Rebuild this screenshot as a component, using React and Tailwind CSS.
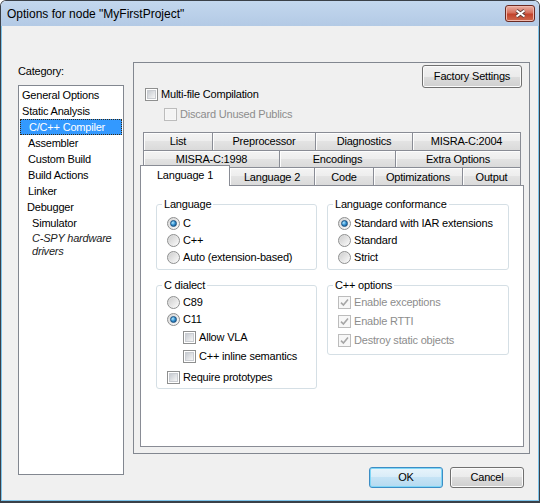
import clsx from 'clsx';

const categories = [
  { label: 'General Options', pad: 'pl-[2px]' },
  { label: 'Static Analysis', pad: 'pl-[2px]' },
  { label: 'C/C++ Compiler', pad: 'pl-[8px]', selected: true },
  { label: 'Assembler', pad: 'pl-[8px]' },
  { label: 'Custom Build', pad: 'pl-[8px]' },
  { label: 'Build Actions', pad: 'pl-[8px]' },
  { label: 'Linker', pad: 'pl-[8px]' },
  { label: 'Debugger', pad: 'pl-[7px]' },
];

const tabRows = [
  [
    { label: 'List', w: 'w-[70px]' },
    { label: 'Preprocessor', w: 'w-[104px]' },
    { label: 'Diagnostics', w: 'w-[98px]' },
    { label: 'MISRA-C:2004', w: 'w-[109px]' },
  ],
  [
    { label: 'MISRA-C:1998', w: 'w-[137px]' },
    { label: 'Encodings', w: 'w-[117px]' },
    { label: 'Extra Options', w: 'w-[126px]' },
  ],
];

const frontTabs = [
  { label: 'Language 1', w: 'w-[90px]', selected: true },
  { label: 'Language 2', w: 'w-[86px]' },
  { label: 'Code', w: 'w-[60px]' },
  { label: 'Optimizations', w: 'w-[90px]' },
  { label: 'Output', w: 'w-[59px]' },
];

const tabBg = 'bg-[linear-gradient(#f4f4f4,#ededed_50%,#e3e3e3_50%,#dadada)]';

function Checkbox({ checked, disabled }) {
  return (
    <span
      className={clsx(
        'flex h-[13px] w-[13px] shrink-0 items-center justify-center border p-px',
        disabled ? 'border-[#bcbcbc] bg-[#f7f7f7]' : 'border-[#8e8f8f] bg-white'
      )}
    >
      {checked ? (
        <svg width="9" height="9" viewBox="0 0 9 9">
          <path d="M1 4.6 L3.4 7 L8 1.4" fill="none" stroke="#a6a6a6" strokeWidth="1.6" />
        </svg>
      ) : (
        <span
          className={clsx(
            'h-full w-full',
            disabled ? 'bg-[#f4f4f4]' : 'border border-[#c9ccd1] bg-linear-to-br from-[#c7cbd1] to-[#f6f6f6]'
          )}
        />
      )}
    </span>
  );
}

function Radio({ checked }) {
  return (
    <span className="flex h-[13px] w-[13px] shrink-0 items-center justify-center rounded-full border border-[#8e8f8f] bg-linear-to-br from-[#d6d6d6] to-[#fbfbfb]">
      {checked ? (
        <span className="h-[7px] w-[7px] rounded-full border border-[#1c5180] bg-radial-[at_35%_35%] from-[#b4e8ff] via-[#2f8fd0] to-[#0f4174]" />
      ) : (
        <span className="h-[9px] w-[9px] rounded-full bg-linear-to-br from-[#cfcfcf] to-[#f8f8f8]" />
      )}
    </span>
  );
}

function RadioRow({ label, checked }) {
  return (
    <div className="flex h-[17px] items-center gap-[3px]">
      <Radio checked={checked} />
      <span>{label}</span>
    </div>
  );
}

function CheckRow({ label, checked, disabled, className }) {
  return (
    <div className={clsx('flex h-[19px] items-center gap-[3px]', className)}>
      <Checkbox checked={checked} disabled={disabled} />
      <span className={disabled ? 'text-[#8d8d8d]' : ''}>{label}</span>
    </div>
  );
}

function Group({ title, children, className }) {
  return (
    <fieldset className="rounded-[3px] border border-[#d5dfe5]">
      <legend className="ml-[5px] px-[2px] leading-[13px]">{title}</legend>
      <div className={clsx('pl-[10px]', className)}>{children}</div>
    </fieldset>
  );
}

function Button({ children, className, primary }) {
  return (
    <button
      className={clsx(
        'flex items-center justify-center rounded-[3px] border',
        primary
          ? 'border-[#3c8dc5] bg-[linear-gradient(#e8f4fb,#d8ecf8_50%,#c5e3f5_50%,#b5daf0)] shadow-[inset_0_0_0_1px_#7fd6f6]'
          : 'border-[#707070] bg-[linear-gradient(#f2f2f2,#ebebeb_50%,#dddddd_50%,#cfcfcf)] shadow-[inset_0_0_0_1px_#fbfbfb]',
        className
      )}
    >
      {children}
    </button>
  );
}

function Tab({ label, w, first }) {
  return (
    <div
      className={clsx(
        'flex h-full items-center justify-center border border-b-0 border-[#898c95] shadow-[inset_1px_1px_0_#fdfdfd]',
        tabBg,
        w,
        !first && '-ml-px'
      )}
    >
      {label}
    </div>
  );
}

export default function App() {
  return (
    <div className="flex h-[503px] w-[540px] flex-col overflow-hidden rounded-t-[6px] border border-b-2 border-[#3a4048] font-['Liberation_Sans',Arial,sans-serif] text-[11px] tracking-[-0.2px] text-black">
      {/* title bar */}
      <div className="flex h-[25px] shrink-0 items-center justify-between bg-linear-to-b from-[#c3d7ee] to-[#b3cae5] pl-[6px] pr-[4px]">
        <span className="text-[12px] tracking-normal">Options for node "MyFirstProject"</span>
        <div className="flex h-[17px] w-[30px] items-center justify-center rounded-[3px] border border-[#6b2a22] bg-[linear-gradient(#eab0a4,#d6705d_45%,#c2432c_55%,#cf6a4f)] shadow-[inset_0_0_0_1px_#f0b9ad]">
          <svg width="13" height="9" viewBox="0 0 13 9">
            <path d="M2.5 1.5 L10.5 7.5 M10.5 1.5 L2.5 7.5" stroke="#5b3a36" strokeWidth="3.6" />
            <path d="M2.5 1.5 L10.5 7.5 M10.5 1.5 L2.5 7.5" stroke="#ffffff" strokeWidth="2" />
          </svg>
        </div>
      </div>

      <div className="flex flex-1 border-x border-b border-[#7ec4ea] bg-[#f0f0f0] pl-[16px]">
        {/* category list */}
        <div className="flex flex-col pt-[39px]">
          <span className="leading-[13px]">Category:</span>
          <div className="mt-[7px] h-[390px] w-[106px] border border-[#828790] bg-white pt-px">
            {categories.map((c) => (
              <div
                key={c.label}
                className={clsx(
                  'mx-px flex h-[16px] items-center',
                  c.pad,
                  c.selected && 'border border-dotted border-[#3b2a10] bg-[#3399ff] text-white'
                )}
              >
                {c.label}
              </div>
            ))}
            <div className="mx-px flex h-[17px] items-center pl-[12px]">Simulator</div>
            <div className="mx-px pl-[12px] italic leading-[13px] text-[#222]">
              C-SPY hardware
              <br />
              drivers
            </div>
          </div>
        </div>

        {/* options */}
        <div className="ml-[9px] flex w-[397px] flex-col pt-[36px]">
          <div className="flex h-[392px] flex-col border border-[#828790]">
            <div className="flex justify-end pr-[7px] pt-[2px]">
              <Button className="h-[23px] w-[100px]">Factory Settings</Button>
            </div>
            <div className="flex h-[13px] items-center gap-[3px] pl-[11px]">
              <Checkbox />
              <span>Multi-file Compilation</span>
            </div>
            <div className="mt-[7px] flex h-[13px] items-center gap-[3px] pl-[30px]">
              <Checkbox disabled />
              <span className="text-[#8d8d8d]">Discard Unused Publics</span>
            </div>

            <div className="ml-[6px] mt-[11px] w-[384px]">
              <div className="flex h-[18px] pl-[3px]">
                {tabRows[0].map((t, i) => (
                  <Tab key={t.label} {...t} first={i === 0} />
                ))}
              </div>
              <div className="flex h-[17px] pl-[3px]">
                {tabRows[1].map((t, i) => (
                  <Tab key={t.label} {...t} first={i === 0} />
                ))}
              </div>
              <div className="relative z-10 flex h-[18px] items-end">
                {frontTabs.map((t, i) =>
                  t.selected ? (
                    <div
                      key={t.label}
                      className={clsx(
                        'relative z-10 -mb-px flex h-[21px] items-center justify-center border border-b-0 border-[#898c95] bg-white pb-px',
                        t.w
                      )}
                    >
                      {t.label}
                    </div>
                  ) : (
                    <div
                      key={t.label}
                      className={clsx(
                        'flex h-[18px] items-center justify-center border border-b-0 border-[#898c95] pt-[2px] shadow-[inset_1px_1px_0_#fdfdfd]',
                        tabBg,
                        t.w,
                        i > 0 && '-ml-px'
                      )}
                    >
                      {t.label}
                    </div>
                  )
                )}
              </div>

              <div className="h-[262px] border border-[#898c95] bg-white pl-[15px] pt-[12px]">
                <div className="grid grid-cols-[161px_182px] items-start gap-x-[10px] gap-y-[9px]">
                  <Group title="Language" className="pb-[3px] pt-[4px]">
                    <RadioRow label="C" checked />
                    <RadioRow label="C++" />
                    <RadioRow label="Auto (extension-based)" />
                  </Group>
                  <Group title="Language conformance" className="pb-[3px] pt-[4px]">
                    <RadioRow label="Standard with IAR extensions" checked />
                    <RadioRow label="Standard" />
                    <RadioRow label="Strict" />
                  </Group>
                  <Group title="C dialect" className="pb-px pt-[2px]">
                    <RadioRow label="C89" />
                    <RadioRow label="C11" checked />
                    <CheckRow label="Allow VLA" className="pl-[16px]" />
                    <CheckRow label="C++ inline semantics" className="pl-[16px]" />
                    <CheckRow label="Require prototypes" className="mt-[2px]" />
                  </Group>
                  <Group title="C++ options" className="pb-[4px] pt-px">
                    <CheckRow label="Enable exceptions" checked disabled />
                    <CheckRow label="Enable RTTI" checked disabled />
                    <CheckRow label="Destroy static objects" checked disabled />
                  </Group>
                </div>
              </div>
            </div>
          </div>

          <div className="mt-[13px] flex justify-end gap-[7px] pr-[6px]">
            <Button primary className="h-[21px] w-[74px]">
              OK
            </Button>
            <Button className="h-[21px] w-[74px]">Cancel</Button>
          </div>
        </div>
      </div>
    </div>
  );
}
